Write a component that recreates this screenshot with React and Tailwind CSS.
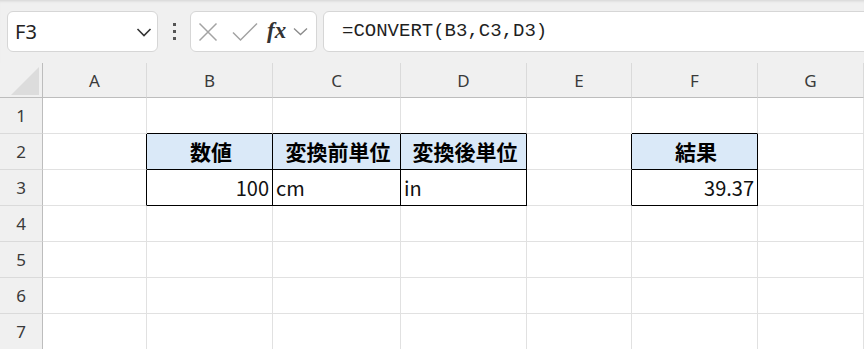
import React from 'react';

const cols = ['A', 'B', 'C', 'D', 'E', 'F', 'G'];

// row -> col -> { text, head, align }
const cells = {
  2: {
    2: { text: '数値', head: true },
    3: { text: '変換前単位', head: true },
    4: { text: '変換後単位', head: true },
    6: { text: '結果', head: true },
  },
  3: {
    2: { text: '100', align: 'right' },
    3: { text: 'cm' },
    4: { text: 'in' },
    6: { text: '39.37', align: 'right' },
  },
};

const inTable = (r, c) => (r === 2 || r === 3) && ((c >= 2 && c <= 4) || c === 6);

const Toolbar = () => (
  <div className="h-[63px] bg-[#f0f0f0] flex items-start pt-[11px] shadow-[inset_0_3px_3px_-2px_rgba(0,0,0,0.12)]">
    {/* Name box */}
    <div className="ml-[7px] w-[151px] h-[41px] bg-white border border-[#d6d6d6] rounded-[6px] flex items-center pl-[7px] pr-[5px]">
      <span className="flex-1 text-[20px] text-[#222] font-['Noto_Sans',sans-serif] leading-none">F3</span>
      <svg className="w-[16px] h-[10px]" viewBox="0 0 16 10" fill="none" stroke="#333" strokeWidth="1.6">
        <path d="M1.5 2l6.5 6.5L14.5 2" />
      </svg>
    </div>

    {/* Vertical ellipsis */}
    <div className="w-[32px] h-[41px] flex flex-col items-center justify-center gap-[4px]">
      <span className="w-[3px] h-[3px] bg-[#555]" />
      <span className="w-[3px] h-[3px] bg-[#555]" />
      <span className="w-[3px] h-[3px] bg-[#555]" />
    </div>

    {/* Cancel / Enter / fx */}
    <div className="w-[127px] h-[41px] bg-white border border-[#d6d6d6] rounded-[6px] flex items-center pl-[7px]">
      <svg className="w-[20px] h-[20px]" viewBox="0 0 20 20" fill="none" stroke="#a3a3a3" strokeWidth="1.5">
        <path d="M1.5 1.5l17 17M18.5 1.5l-17 17" />
      </svg>
      <svg className="w-[26px] h-[20px] ml-[14px]" viewBox="0 0 26 20" fill="none" stroke="#a3a3a3" strokeWidth="1.5">
        <path d="M1 10.5l7.5 7.5L25 1.5" />
      </svg>
      <span className="ml-[9px] text-[23px] italic font-bold text-[#333] font-['Liberation_Serif',serif] leading-none pb-[2px]">fx</span>
      <svg className="w-[15px] h-[9px] ml-[7px]" viewBox="0 0 15 9" fill="none" stroke="#8a8a8a" strokeWidth="1.3">
        <path d="M1 1.5l6.5 6 6.5-6" />
      </svg>
    </div>

    {/* Formula bar */}
    <div className="ml-[6px] flex-1 -mr-[10px] h-[41px] bg-white border border-[#d6d6d6] rounded-[6px] flex items-center pl-[18px]">
      <span className="text-[19px] text-[#1f1f1f] font-['Liberation_Mono',monospace] leading-none">=CONVERT(B3,C3,D3)</span>
    </div>
  </div>
);

const Cell = ({ r, c }) => {
  const cell = cells[r]?.[c];
  const right = inTable(r, c) || inTable(r, c + 1);
  const bottom = inTable(r, c) || inTable(r + 1, c);
  return (
    <div
      className={`flex items-center overflow-hidden whitespace-nowrap border-r border-b font-['Noto_Sans_CJK_JP','Noto_Sans',sans-serif] leading-none ${
        right ? 'border-r-black' : 'border-r-[#e1e1e1]'
      } ${bottom ? 'border-b-black' : 'border-b-[#e1e1e1]'} ${
        cell?.head ? 'bg-[#dae9f8] justify-center font-bold text-[21px] text-black' : 'bg-white text-[20px] text-[#111]'
      } ${cell?.align === 'right' ? 'justify-end pr-[3px]' : 'pl-[3px]'}`}
    >
      {cell?.text}
    </div>
  );
};

export default function App() {
  const rows = [1, 2, 3, 4, 5, 6, 7];
  return (
    <div className="w-[864px] h-[349px] overflow-hidden bg-white">
      <Toolbar />
      <div className="grid grid-cols-[43px_104px_126px_128px_126px_105px_126px_106px] grid-rows-[35px_repeat(7,36px)]">
        {/* corner */}
        <div className="bg-[#f0f0f0] border-r border-b border-[#bdbdbd] flex items-end justify-end pr-[3px] pb-[2px]">
          <svg className="w-[28px] h-[28px]" viewBox="0 0 28 28">
            <path d="M0 28L28 0V28Z" fill="#dcdcdc" />
          </svg>
        </div>
        {cols.map((col) => (
          <div
            key={col}
            className="bg-[#f0f0f0] border-r border-r-[#dadada] border-b border-b-[#bdbdbd] flex items-center justify-center text-[17px] text-[#3a3a3a] font-['Noto_Sans',sans-serif] leading-none"
          >
            {col}
          </div>
        ))}
        {rows.map((r) => (
          <React.Fragment key={r}>
            <div className="bg-[#f0f0f0] border-r border-r-[#bdbdbd] border-b border-b-[#dadada] flex items-center justify-center text-[17px] text-[#3a3a3a] font-['Noto_Sans',sans-serif] leading-none">
              {r}
            </div>
            {cols.map((col, i) => (
              <Cell key={col} r={r} c={i + 1} />
            ))}
          </React.Fragment>
        ))}
      </div>
    </div>
  );
}
